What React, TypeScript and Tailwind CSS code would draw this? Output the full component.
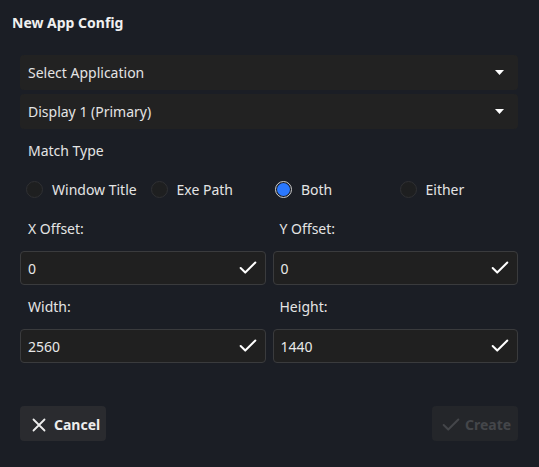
import React from "react";

const Check = ({ className = "" }: { className?: string }) => (
  <svg width="22" height="22" viewBox="0 0 24 24" fill="none" stroke="currentColor" strokeWidth="2.2" strokeLinecap="round" strokeLinejoin="round" className={className}>
    <path d="M20 6 9 17l-5-5" />
  </svg>
);

const Caret = () => (
  <svg width="9" height="5" viewBox="0 0 9 5" className="text-white">
    <path d="M0 0h9L4.5 5z" fill="currentColor" />
  </svg>
);

function Select({ label }: { label: string }) {
  return (
    <div className="h-[35px] rounded-[4px] bg-[#222222] flex items-center justify-between pl-2 pr-[14px]">
      <span className="text-[14px] text-[#e4e4e4]">{label}</span>
      <Caret />
    </div>
  );
}

function Radio({ label, checked }: { label: string; checked?: boolean }) {
  return (
    <div className="flex items-center gap-[9px] pl-[6px]">
      {checked ? (
        <div className="w-[17px] h-[17px] rounded-full border-[1.5px] border-[#d0d0d0] p-[1px] bg-[#1b1e25]">
          <div className="w-full h-full rounded-full bg-[#2a78ff]" />
        </div>
      ) : (
        <div className="w-[17px] h-[17px] rounded-full border border-[#2f3033] bg-[#1e1f20]" />
      )}
      <span className="text-[14px] text-[#e4e4e4]">{label}</span>
    </div>
  );
}

function Input({ value }: { value: string }) {
  return (
    <div className="h-[34px] rounded-[4px] bg-[#202020] border border-[#3a3b3d] flex items-center justify-between pl-[7px] pr-[6px]">
      <span className="text-[14px] text-[#e8e8e8]">{value}</span>
      <Check className="text-white" />
    </div>
  );
}

export default function App() {
  return (
    <div
      className="w-[539px] h-[467px] bg-[#1b1e25] text-[#e4e4e4] overflow-hidden"
      style={{ fontFamily: '"Noto Sans", "Open Sans", sans-serif' }}
    >
      <div className="h-[44px] flex items-center px-3">
        <span className="text-[14px] font-bold text-[#f0f0f0]">New App Config</span>
      </div>
      <div className="pl-5 pr-[21px] flex flex-col">
        <div className="mt-[11px]">
          <Select label="Select Application" />
        </div>
        <div className="mt-[4px]">
          <Select label="Display 1 (Primary)" />
        </div>
        <div className="mt-[12px] h-[20px] leading-[20px] pl-2 text-[14px]">Match Type</div>
        <div className="mt-[14px] h-[28px] grid grid-cols-4 items-center">
          <Radio label="Window Title" />
          <Radio label="Exe Path" />
          <Radio label="Both" checked />
          <Radio label="Either" />
        </div>
        <div className="mt-[16px] grid grid-cols-2 gap-x-[7px]">
          <div className="h-[20px] leading-[20px] pl-2 text-[14px]">X Offset:</div>
          <div className="h-[20px] leading-[20px] pl-[7px] text-[14px]">Y Offset:</div>
        </div>
        <div className="mt-[12px] grid grid-cols-2 gap-x-[7px]">
          <Input value="0" />
          <Input value="0" />
        </div>
        <div className="mt-[12px] grid grid-cols-2 gap-x-[7px]">
          <div className="h-[20px] leading-[20px] pl-2 text-[14px]">Width:</div>
          <div className="h-[20px] leading-[20px] pl-[7px] text-[14px]">Height:</div>
        </div>
        <div className="mt-[12px] grid grid-cols-2 gap-x-[7px]">
          <Input value="2560" />
          <Input value="1440" />
        </div>
        <div className="mt-[43px] flex justify-between">
          <button className="h-[35px] w-[86px] rounded-[4px] bg-[#2a2b2f] flex items-center pl-[11px] pt-[2px] gap-[7px] text-[#ededed]">
            <svg width="16" height="16" viewBox="0 0 16 16" fill="none" stroke="currentColor" strokeWidth="1.8" strokeLinecap="round">
              <path d="M2.5 2.5l11 11M13.5 2.5l-11 11" />
            </svg>
            <span className="text-[14px] font-bold">Cancel</span>
          </button>
          <button className="h-[35px] w-[86px] rounded-[4px] bg-[#24262a] flex items-center pl-[8px] pt-[2px] gap-[3px] text-[#44464a]">
            <Check />
            <span className="text-[14px] font-bold">Create</span>
          </button>
        </div>
      </div>
    </div>
  );
}
